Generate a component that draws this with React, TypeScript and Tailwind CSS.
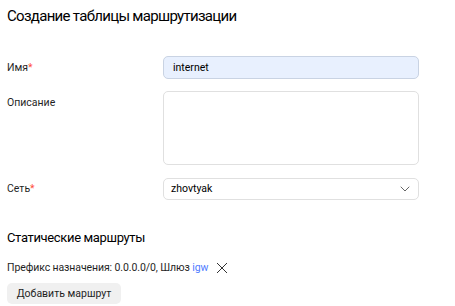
import React from "react";

export default function App() {
  const font = { fontFamily: 'Roboto, "Open Sans", sans-serif' };
  return (
    <div className="w-[455px] h-[306px] bg-white text-[#1f1f1f] px-[7px] overflow-hidden" style={font}>
      <div className="pt-[5px] h-[56px]">
        <h1 className="text-[15px] leading-[22px] font-normal tracking-[-0.7px] text-black">Создание таблицы маршрутизации</h1>
      </div>
      <div className="flex flex-col gap-[12px]">
        <div className="flex items-start">
          <div className="w-[156px] text-[10.5px] leading-[23px]">
            Имя<span className="text-[#ff4d3a]">*</span>
          </div>
          <div className="w-[256px] h-[23px] rounded-[5px] border border-[#c9d3e3] bg-[#e8f0fe] px-[9px] text-[10.5px] leading-[21px] text-black">
            internet
          </div>
        </div>
        <div className="flex items-start">
          <div className="w-[156px] text-[10.5px] leading-[23px]">Описание</div>
          <div className="w-[256px] h-[74px] rounded-[5px] border border-[#e0e0e0] bg-white" />
        </div>
        <div className="flex items-start mt-[1px]">
          <div className="w-[156px] text-[10.5px] leading-[22px]">
            Сеть<span className="text-[#ff4d3a]">*</span>
          </div>
          <div className="w-[256px] h-[22px] rounded-[5px] border border-[#e0e0e0] bg-white pl-[7px] pr-[8px] flex items-center justify-between text-[10.5px] text-black">
            <span>zhovtyak</span>
            <svg width="10" height="6" viewBox="0 0 10 6" fill="none">
              <path d="M1 1l4 4 4-4" stroke="#666" strokeWidth="1" strokeLinecap="round" strokeLinejoin="round" />
            </svg>
          </div>
        </div>
      </div>
      <div className="mt-[27px] text-[13px] leading-[22px] tracking-[-0.35px] text-black">Статические маршруты</div>
      <div className="mt-[11px] flex items-center text-[10.5px] leading-[16px] tracking-[-0.1px]">
        <span>
          Префикс назначения: 0.0.0.0/0, Шлюз <span className="text-[#4f7cff]">igw</span>
        </span>
        <svg className="ml-[8px]" width="12" height="12" viewBox="0 0 12 12" fill="none">
          <path d="M1 1l10 10M11 1L1 11" stroke="#333" strokeWidth="1" />
        </svg>
      </div>
      <div className="mt-[4px]">
        <button className="h-[21px] w-[114px] rounded-[5px] bg-[#f0f0f0] text-[10.5px] text-[#1f1f1f]">
          Добавить маршрут
        </button>
      </div>
    </div>
  );
}
